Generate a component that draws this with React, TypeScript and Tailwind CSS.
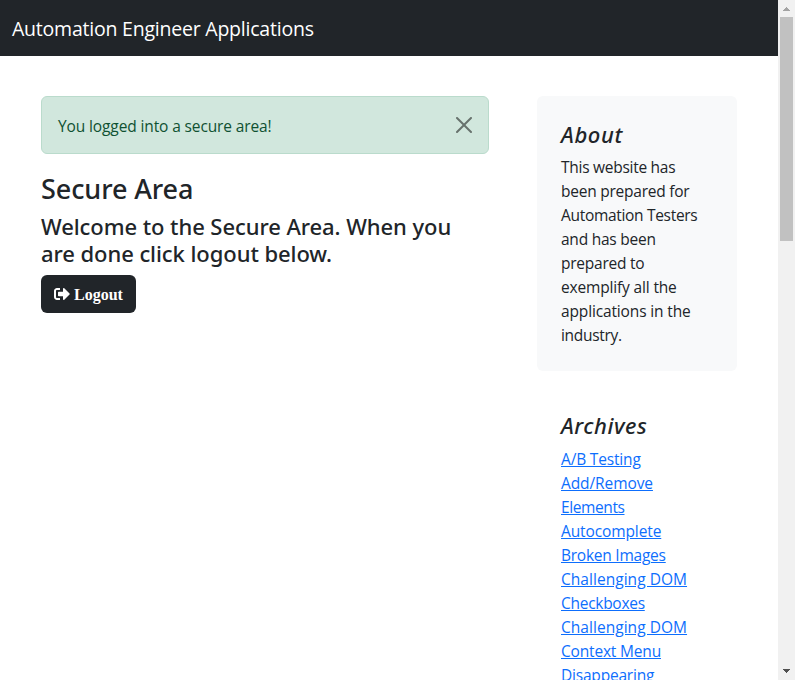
import { FaSignOutAlt } from "react-icons/fa";

const about = [
  ["This website has", "tracking-[-0.27px]"],
  ["been prepared for", "tracking-[-0.24px]"],
  ["Automation Testers", "tracking-[-0.31px]"],
  ["and has been", "tracking-[-0.24px]"],
  ["prepared to", "tracking-[-0.24px]"],
  ["exemplify all the", "tracking-[-0.16px]"],
  ["applications in the", "tracking-[-0.14px]"],
  ["industry.", "tracking-[-0.3px]"],
];

const links = [
  [["A/B Testing", "tracking-[-0.17px]"]],
  [["Add/Remove", "tracking-[-0.09px]"], ["Elements", "tracking-[-0.4px]"]],
  [["Autocomplete", "tracking-[-0.11px]"]],
  [["Broken Images", "tracking-[-0.24px]"]],
  [["Challenging DOM", "tracking-[0.04px]"]],
  [["Checkboxes", "tracking-[-0.28px]"]],
  [["Challenging DOM", "tracking-[0.04px]"]],
  [["Context Menu", "tracking-[-0.18px]"]],
  [["Disappearing", "tracking-[-0.2px]"], ["Elements", "tracking-[-0.4px]"]],
];

function Scrollbar() {
  return (
    <div className="flex h-full w-[17px] shrink-0 flex-col items-center bg-[#f1f1f1]">
      <svg className="h-[17px] w-[17px] shrink-0" viewBox="0 0 17 17" shapeRendering="crispEdges">
        <path d="M8 7h1v1h1v1h1v1h1v1H5v-1h1V9h1V8h1z" fill="#a3a3a3" />
      </svg>
      <div className="h-[224px] w-[13px] bg-[#c1c1c1]" />
      <svg className="mt-auto h-[17px] w-[17px] shrink-0" viewBox="0 0 17 17" shapeRendering="crispEdges">
        <path d="M5 6h7v1h-1v1h-1v1H9v1H8V9H7V8H6V7H5z" fill="#505050" />
      </svg>
    </div>
  );
}

export default function App() {
  return (
    <div className="flex h-[680px] w-[795px] overflow-hidden bg-white font-['Open_Sans','Noto_Sans',sans-serif] text-[15.5px] leading-6 text-[#212529]">
      <div className="h-full min-w-0 flex-1 overflow-hidden">
        <header className="flex h-14 items-center bg-[#212529] px-3 pt-px">
          <a className="whitespace-nowrap text-[19.5px] leading-[30px] tracking-[-0.22px] text-white">Automation Engineer Applications</a>
        </header>
        <div className="flex gap-12 pl-[41px] pt-10">
          <main className="w-[448px] shrink-0">
            <div className="mb-4 flex h-[58px] items-center justify-between rounded-md border border-[#badbcc] bg-[#d1e7dd] px-4 text-[#0f5132]">
              <span className="whitespace-nowrap pt-px tracking-[-0.12px]">You logged into a secure area!</span>
              <button aria-label="Close" className="opacity-50">
                <svg className="h-4 w-4" viewBox="0 0 16 16" fill="#000">
                  <path d="M.293.293a1 1 0 0 1 1.414 0L8 6.586 14.293.293a1 1 0 1 1 1.414 1.414L9.414 8l6.293 6.293a1 1 0 0 1-1.414 1.414L8 9.414l-6.293 6.293a1 1 0 0 1-1.414-1.414L6.586 8 .293 1.707a1 1 0 0 1 0-1.414z" />
                </svg>
              </button>
            </div>
            <h2 className="mb-1.5 pt-0.5 font-['Noto_Sans'] text-[27px] font-medium leading-[34px] tracking-[-0.1px]">Secure Area</h2>
            <h4 className="mb-[7px] whitespace-nowrap pt-px font-['Noto_Sans'] text-[22px] font-medium leading-[27.34px] tracking-[-0.07px]">
              <span className="block">Welcome to the Secure Area. When you</span>
              <span className="block">are done click logout below.</span>
            </h4>
            <button className="flex h-[38px] w-[95px] items-center justify-center gap-1 rounded-md bg-[#212529] font-['Liberation_Serif',serif] text-base font-bold text-white">
              <FaSignOutAlt className="h-4 w-4" />
              <span className="pt-[3px]">Logout</span>
            </button>
          </main>
          <aside className="w-[200px] shrink-0">
            <section className="mb-4 rounded-md bg-[#f8f9fa] p-6">
              <h4 className="mb-[7px] pt-px font-['Noto_Sans'] text-[22px] font-medium italic leading-[27.34px] tracking-[0.6px]">About</h4>
              <p>
                {about.map(([line, spacing]) => (
                  <span key={line} className={`block whitespace-nowrap ${spacing}`}>{line}</span>
                ))}
              </p>
            </section>
            <section className="p-6">
              <h4 className="mb-[7px] pt-px font-['Noto_Sans'] text-[22px] font-medium italic leading-[27.34px] tracking-[0.55px]">Archives</h4>
              <ol>
                {links.map((lines, i) => (
                  <li key={i}>
                    {lines.map(([line, spacing]) => (
                      <a key={line} className={`block whitespace-nowrap text-[#0d6efd] underline ${spacing}`}>{line}</a>
                    ))}
                  </li>
                ))}
              </ol>
            </section>
          </aside>
        </div>
      </div>
      <Scrollbar />
    </div>
  );
}
